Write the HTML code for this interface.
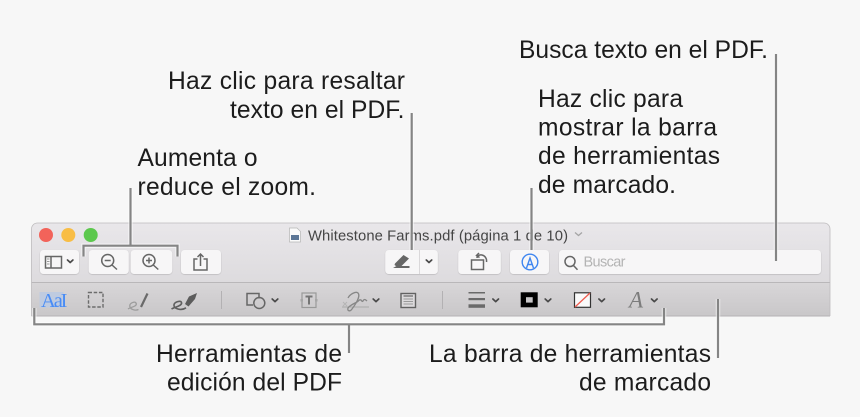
<!DOCTYPE html>
<html lang="es"><head><meta charset="utf-8"><title>Vista Previa</title>
<style>
html,body{margin:0;padding:0;width:860px;height:417px;overflow:hidden;background:#f7f7f7}
svg{display:block}
.t{font-family:"Liberation Sans",sans-serif;font-size:24.6px;fill:#1c1c1c}
.b{fill:#f7f6f7;filter:url(#s)}
.i{fill:none;stroke:#666;stroke-width:1.5}
.c{fill:none;stroke:#484848;stroke-width:1.7;stroke-linecap:round;stroke-linejoin:round}
.l{fill:none;stroke:#858585;stroke-width:2.2}
.h{fill:none;stroke:#fff;stroke-opacity:.55;stroke-width:4.5}
</style></head><body>
<svg width="860" height="417" viewBox="0 0 860 417" xmlns="http://www.w3.org/2000/svg">
<defs>
<filter id="s" x="-10%" y="-20%" width="120%" height="140%"><feDropShadow dx="0" dy=".5" stdDeviation=".5" flood-color="#000" flood-opacity=".22"/></filter>
<filter id="bl" x="-2%" y="-5%" width="104%" height="110%"><feGaussianBlur stdDeviation=".35"/></filter>
<linearGradient id="g1" x1="0" y1="0" x2="0" y2="1"><stop offset="0" stop-color="#e9e7ea"/><stop offset="1" stop-color="#d6d4d7"/></linearGradient>
<linearGradient id="g2" x1="0" y1="0" x2="0" y2="1"><stop offset="0" stop-color="#d8d6d8"/><stop offset="1" stop-color="#c9c7c9"/></linearGradient>
</defs>
<rect width="860" height="417" fill="#f7f7f7"/>

<path d="M31.5 316.5V229a6 6 0 0 1 6-6H824a6 6 0 0 1 6 6v87.5z" fill="url(#g1)"/>
<rect x="31.5" y="283" width="798.5" height="33" fill="url(#g2)"/>
<rect x="31.5" y="282" width="798.5" height="1" fill="#b9b7b9"/>
<rect x="31.5" y="315.5" width="798.5" height="1" fill="#b4b2b4"/>
<path d="M31.5 316V229a6 6 0 0 1 6-6H824a6 6 0 0 1 6 6v87" fill="none" stroke="#bdbbbd" stroke-width=".8"/>

<circle cx="46" cy="235" r="7" fill="#f2635a"/><circle cx="68.300" cy="235" r="7" fill="#f8bd45"/><circle cx="90.700" cy="235" r="7" fill="#5cc84d"/>

<rect class="b" x="40" y="250" width="39" height="24" rx="3.500"/>
<rect class="b" x="88.700" y="250" width="40" height="24" rx="3.500"/>
<rect class="b" x="130.700" y="250" width="41.500" height="24" rx="3.500"/>
<rect class="b" x="181" y="250" width="40" height="24" rx="3.500"/>
<rect class="b" x="385.300" y="250" width="52.500" height="24" rx="3.500"/>
<rect x="419" y="250" width=".8" height="24" fill="#d2d0d2"/>
<rect class="b" x="458.300" y="250" width="42.500" height="24" rx="3.500"/>
<rect class="b" x="510" y="250" width="39" height="24" rx="3.500"/>
<rect class="b" x="559" y="250" width="262" height="24" rx="3.500"/>

<g filter="url(#bl)">
<path d="M289.500 228h7.500l3.500 3.500v10.500h-11z" fill="#fafafa" stroke="#b5b5b5" stroke-width=".7"/><rect x="291" y="235" width="8" height="5" fill="#5c7696"/>
<text x="308" y="240.500" font-family="'Liberation Sans',sans-serif" font-size="14.800" fill="#444" textLength="260" lengthAdjust="spacing">Whitestone Farms.pdf (página 1 de 10)</text>
<path d="M575 232.500l3.500 3 3.500-3" fill="none" stroke="#a5a5a5" stroke-width="1.300"/>

<rect class="i" x="45.500" y="256.500" width="16" height="11.500"/><path class="i" d="M51 256.500v11.500"/><path d="M47 259h2.500M47 261.500h2.500M47 264h2.500" stroke="#999" fill="none"/>
<path class="c" d="M67.500 260l2.700 2.500 2.700-2.500"/>
<circle class="i" cx="107.700" cy="260.500" r="6"/><path class="i" d="M104.700 260.500h6M112 265l5 4.500"/>
<circle class="i" cx="149" cy="260.500" r="6"/><path class="i" d="M146 260.500h6M149 257.500v6M153.300 265l5 4.500"/>
<path class="i" d="M197.500 259h-3.500v11h13v-11h-3.500M200.500 266v-11.500M197.500 257l3-3 3 3"/>

<path d="M393 268l3.500-2h13v2zM395 263.500l8.500-8.500 5.500 3.500-7.500 7.500h-5.500l-1.500-1z" fill="#666"/>
<path class="c" d="M426.300 260l2.700 2.500 2.700-2.500"/>

<rect class="i" x="471.500" y="260" width="12" height="9.500"/><path class="i" d="M477 258c0-2.500 3-3.500 5-3 3 .7 5 3.500 4.500 7M479 253l-2.500 2.500 3 2"/>

<circle cx="530" cy="262" r="7.800" fill="none" stroke="#3f86f0" stroke-width="1.400"/><path d="M526.500 268l3.500-10 3.500 10M527.700 264.500h4.600" fill="none" stroke="#3f86f0" stroke-width="1.400"/>

<circle class="i" cx="570" cy="261.500" r="5"/><path class="i" d="M573.500 265.500l4 4.300"/>
<text x="583.500" y="266.500" font-family="'Liberation Sans',sans-serif" font-size="14.500" fill="#b4b4b4" textLength="42" lengthAdjust="spacing">Buscar</text>

<rect x="39.500" y="292" width="24" height="15.500" fill="#bfcbe0"/>
<text x="41" y="307" font-family="'Liberation Serif',serif" font-size="20.500" fill="#4a8cf5" textLength="26.500" lengthAdjust="spacing">AaI</text>
<rect x="88.500" y="292.500" width="14.500" height="14.500" fill="none" stroke="#6c6c6c" stroke-width="1.400" stroke-dasharray="3.500 1.700"/>
<path d="M128 309c2.500-2 10-2.500 8-6-1.200-2-6 0-6.200 2.500-.3 4 5.500 5.500 8.700 4" fill="none" stroke="#9c9c9c" stroke-width="1.300"/>
<path d="M140 306.500l6.500-13.500 2 1-6.500 13.500z" fill="#6a6a6a"/>
<path d="M171.500 309c3-2 11-3 10-6.500-.8-2.300-7-.8-7.500 2.300-.6 4 7 6.300 12 3" fill="none" stroke="#5e5e5e" stroke-width="1.600"/>
<path d="M185 304l4-7.500 8-3.500-2 6-6.500 7.500z" fill="#5c5c5c"/>
<rect x="221" y="291" width="1" height="18" fill="#b3b1b3"/>

<path class="i" d="M253 305h-6v-11.500h12v5"/><circle class="i" cx="259.300" cy="303" r="5.500"/>
<path class="c" d="M272.200 299l2.800 2.600 2.800-2.600"/>
<rect x="302" y="293" width="14" height="14.500" fill="none" stroke="#999" stroke-width="1.200"/>
<rect x="300.500" y="299" width="2.500" height="2.500" fill="#a5a5a5"/><rect x="315" y="299" width="2.500" height="2.500" fill="#a5a5a5"/>
<path d="M305.500 296.500h7M309 296.500v8" stroke="#747474" stroke-width="2" fill="none"/>
<path d="M342 307h27" stroke="#a8a8a8" fill="none"/>
<path d="M343 302l4 4M347 302l-4 4" stroke="#b5b5b5" fill="none"/>
<path d="M348 298c2-4 8-7 10-5 3 3-3 12-6 16-2 3-5 2-4-1 1-2 5-4 9-6 2-1 2-3 4-2 1 1 1 2 2 1 1-2 2-2 4 0" fill="none" stroke="#878787" stroke-width="1.300"/>
<path class="c" d="M373.200 299l2.800 2.600 2.800-2.600"/>
<rect x="401" y="293.500" width="14.500" height="14" fill="#dcdadc" stroke="#626262" stroke-width="1.400"/>
<path d="M403.500 296h9.500" stroke="#666" stroke-width="1.200"/><path d="M403.500 299h9.500M403.500 301.500h9.500M403.500 304h9.500" stroke="#9a9a9a"/>
<rect x="442" y="291" width="1" height="18" fill="#b3b1b3"/>

<rect x="468.500" y="292" width="16.500" height="1.500" fill="#6a6a6a"/><rect x="468.500" y="298" width="16.500" height="2.200" fill="#6a6a6a"/><rect x="468.500" y="304.300" width="16.500" height="3.500" fill="#6a6a6a"/>
<path class="c" d="M492.900 299l2.800 2.600 2.800-2.600"/>
<rect x="520.700" y="292.300" width="17" height="15" fill="#050505"/><rect x="526" y="297.200" width="6.700" height="5.400" fill="#c8c6c8"/>
<path class="c" d="M545.200 299l2.800 2.600 2.800-2.600"/>
<rect x="574.500" y="292.800" width="16" height="14.500" fill="#fafafa" stroke="#333" stroke-width="1.200"/><path d="M575 307l15-14" stroke="#ef5b50" stroke-width="1.300"/>
<path class="c" d="M598.900 299l2.800 2.600 2.800-2.600"/>
<text x="629" y="307.500" font-family="'Liberation Serif',serif" font-style="italic" font-size="23" fill="#7c7c7c">A</text>
<path class="c" d="M651.500 299l2.800 2.600 2.800-2.600"/>
</g>

<g>
<path class="h" d="M130.500 188v57.700M83.500 256.500v-10.800h94v10.800"/><path class="l" d="M130.500 188v57.700M83.500 256.500v-10.800h94v10.800"/>
<path class="h" d="M411.700 113v137"/><path class="l" d="M411.700 113v137"/>
<path class="h" d="M531.500 188v62"/><path class="l" d="M531.500 188v62"/>
<path class="h" d="M776 54v207"/><path class="l" d="M776 54v207"/>
<path class="h" d="M718 299v59"/><path class="l" d="M718 299v59"/>
<path class="h" d="M34.300 308v16.300H664V308M349 324.300V353"/><path class="l" d="M34.300 308v16.300H664V308M349 324.300V353"/>
</g>

<text class="t" x="168" y="89" textLength="237" lengthAdjust="spacing">Haz clic para resaltar</text>
<text class="t" x="230" y="118" textLength="174.500" lengthAdjust="spacing">texto en el PDF.</text>
<text class="t" x="137.500" y="166" textLength="120" lengthAdjust="spacing">Aumenta o</text>
<text class="t" x="137.500" y="195" textLength="178.500" lengthAdjust="spacing">reduce el zoom.</text>
<text class="t" x="519" y="58" textLength="249" lengthAdjust="spacing">Busca texto en el PDF.</text>
<text class="t" x="538" y="107" textLength="145" lengthAdjust="spacing">Haz clic para</text>
<text class="t" x="538" y="135.500" textLength="179" lengthAdjust="spacing">mostrar la barra</text>
<text class="t" x="538" y="164" textLength="182" lengthAdjust="spacing">de herramientas</text>
<text class="t" x="538" y="193" textLength="138" lengthAdjust="spacing">de marcado.</text>
<text class="t" x="156" y="362" textLength="186" lengthAdjust="spacing">Herramientas de</text>
<text class="t" x="167" y="390.500" textLength="175" lengthAdjust="spacing">edición del PDF</text>
<text class="t" x="429" y="362" textLength="282" lengthAdjust="spacing">La barra de herramientas</text>
<text class="t" x="579" y="390.500" textLength="132" lengthAdjust="spacing">de marcado</text>
</svg>
</body></html>
